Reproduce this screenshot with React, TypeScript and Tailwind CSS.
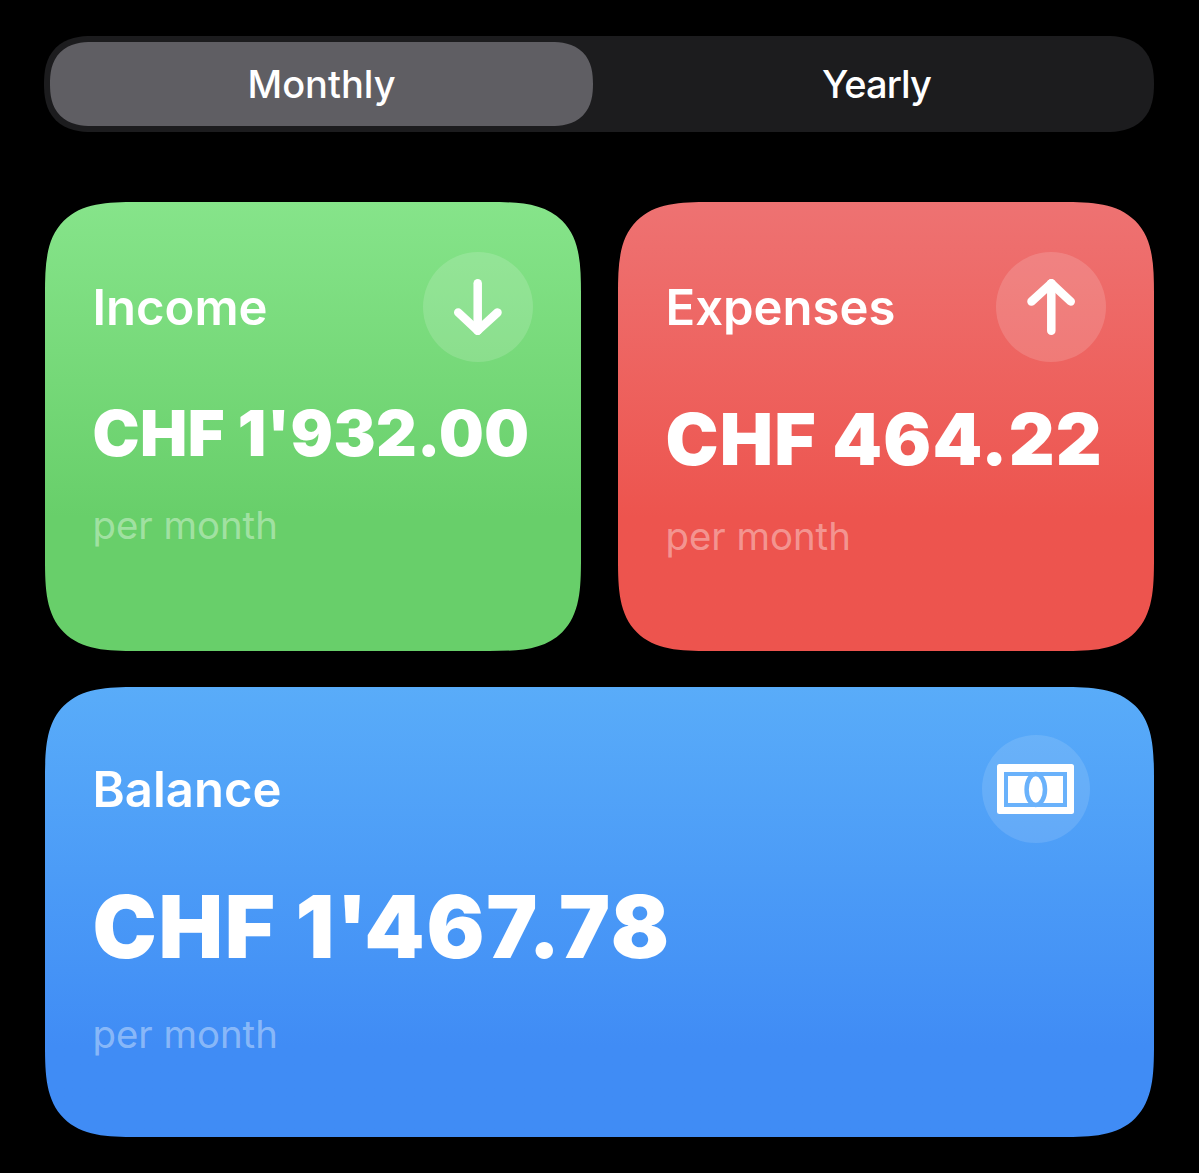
import type { ReactNode } from 'react'

/** Long-shafted arrow, drawn pointing down; flip it for the up variant */
function Arrow({ up }: { up?: boolean }) {
  return (
    <svg
      width="48"
      height="56"
      viewBox="0 0 48 56"
      fill="none"
      stroke="#ffffff"
      strokeWidth="8.5"
      strokeLinecap="round"
      strokeLinejoin="round"
      className={up ? 'rotate-180' : ''}
    >
      <path d="M23.7 4.25V51.7" />
      <path d="M4.25 33.5 23.7 51.7 43.5 33.5" />
    </svg>
  )
}

/** Banknote glyph for the balance card */
function BillIcon() {
  return (
    <svg width="78" height="51" viewBox="0 0 78 51">
      <rect x="0" y="0" width="77" height="50" rx="2.5" fill="#ffffff" />
      <rect x="9" y="10" width="59" height="31" fill="#ffffff" stroke="#6ab2fb" strokeWidth="4" />
      <ellipse cx="38.8" cy="25.5" rx="9.2" ry="15.5" fill="#ffffff" stroke="#6ab2fb" strokeWidth="4.5" />
    </svg>
  )
}

interface CardProps {
  title: string
  amount: string
  icon: ReactNode
  background: string
  amountClass: string
  subClass: string
  iconClass: string
  wide?: boolean
}

function Card({ title, amount, icon, background, amountClass, subClass, iconClass, wide }: CardProps) {
  return (
    <div className={`${background} ${wide ? 'h-[450px] pr-[64px] pt-[48px]' : 'h-[449px] pr-[48px] pt-[50px]'} rounded-[92px] pl-[47.5px] text-white [corner-shape:superellipse(1.6)]`}>
      <div className="flex items-center justify-between">
        <span className="pt-[2px] text-[49px] font-semibold leading-[56px]">{title}</span>
        <div className={`${iconClass} flex items-center justify-center rounded-full`}>{icon}</div>
      </div>
      <div className={`${amountClass} font-black whitespace-nowrap`}>{amount}</div>
      <div className={`${subClass} text-[38.3px] leading-[46px] text-white/40`}>per month</div>
    </div>
  )
}

export default function App() {
  return (
    <div
      className="flex h-[1173px] w-[1199px] flex-col bg-black pt-[36px] pr-[45px] pl-[45px]"
      style={{ fontFamily: 'Inter, "Liberation Sans", sans-serif' }}
    >
      {/* Monthly / Yearly switch */}
      <div className="-ml-px flex h-[96px] w-[1110px] items-center rounded-[48px] bg-[#1c1c1e] pl-[6px] text-[38px] font-medium text-white [corner-shape:superellipse(1.3)]">
        <div className="flex h-[84px] w-[543px] items-center justify-center rounded-[42px] bg-[#5f5e63] [corner-shape:superellipse(1.3)]">Monthly</div>
        <div className="flex flex-1 items-center justify-center pl-[6px] tracking-[-0.9px]">Yearly</div>
      </div>

      <div className="mt-[70px] grid grid-cols-2 gap-x-[37px] gap-y-[36px]">
        <Card
          title="Income"
          amount="CHF 1'932.00"
          icon={<Arrow />}
          background="bg-gradient-to-b from-[#86e48a] to-[#68cf6a] to-70%"
          amountClass="mt-[34px] text-[63px] leading-[75px] tracking-[0.4px]"
          subClass="mt-[31px]"
          iconClass="h-[110px] w-[110px] bg-white/15"
        />
        <Card
          title="Expenses"
          amount="CHF 464.22"
          icon={<Arrow up />}
          background="bg-gradient-to-b from-[#ee7272] to-[#ed544e] to-70%"
          amountClass="mt-[34px] text-[71px] leading-[86px] tracking-[1.2px]"
          subClass="mt-[31px]"
          iconClass="h-[110px] w-[110px] bg-white/15"
        />
        <div className="col-span-2">
          <Card
            wide
            title="Balance"
            amount="CHF 1'467.78"
            icon={<BillIcon />}
            background="bg-gradient-to-b from-[#59acf9] to-[#408cf5] to-80%"
            amountClass="mt-[34px] text-[86px] leading-[100px] tracking-[1.7px]"
            subClass="mt-[34px]"
            iconClass="h-[108px] w-[108px] bg-white/12"
          />
        </div>
      </div>
    </div>
  )
}
